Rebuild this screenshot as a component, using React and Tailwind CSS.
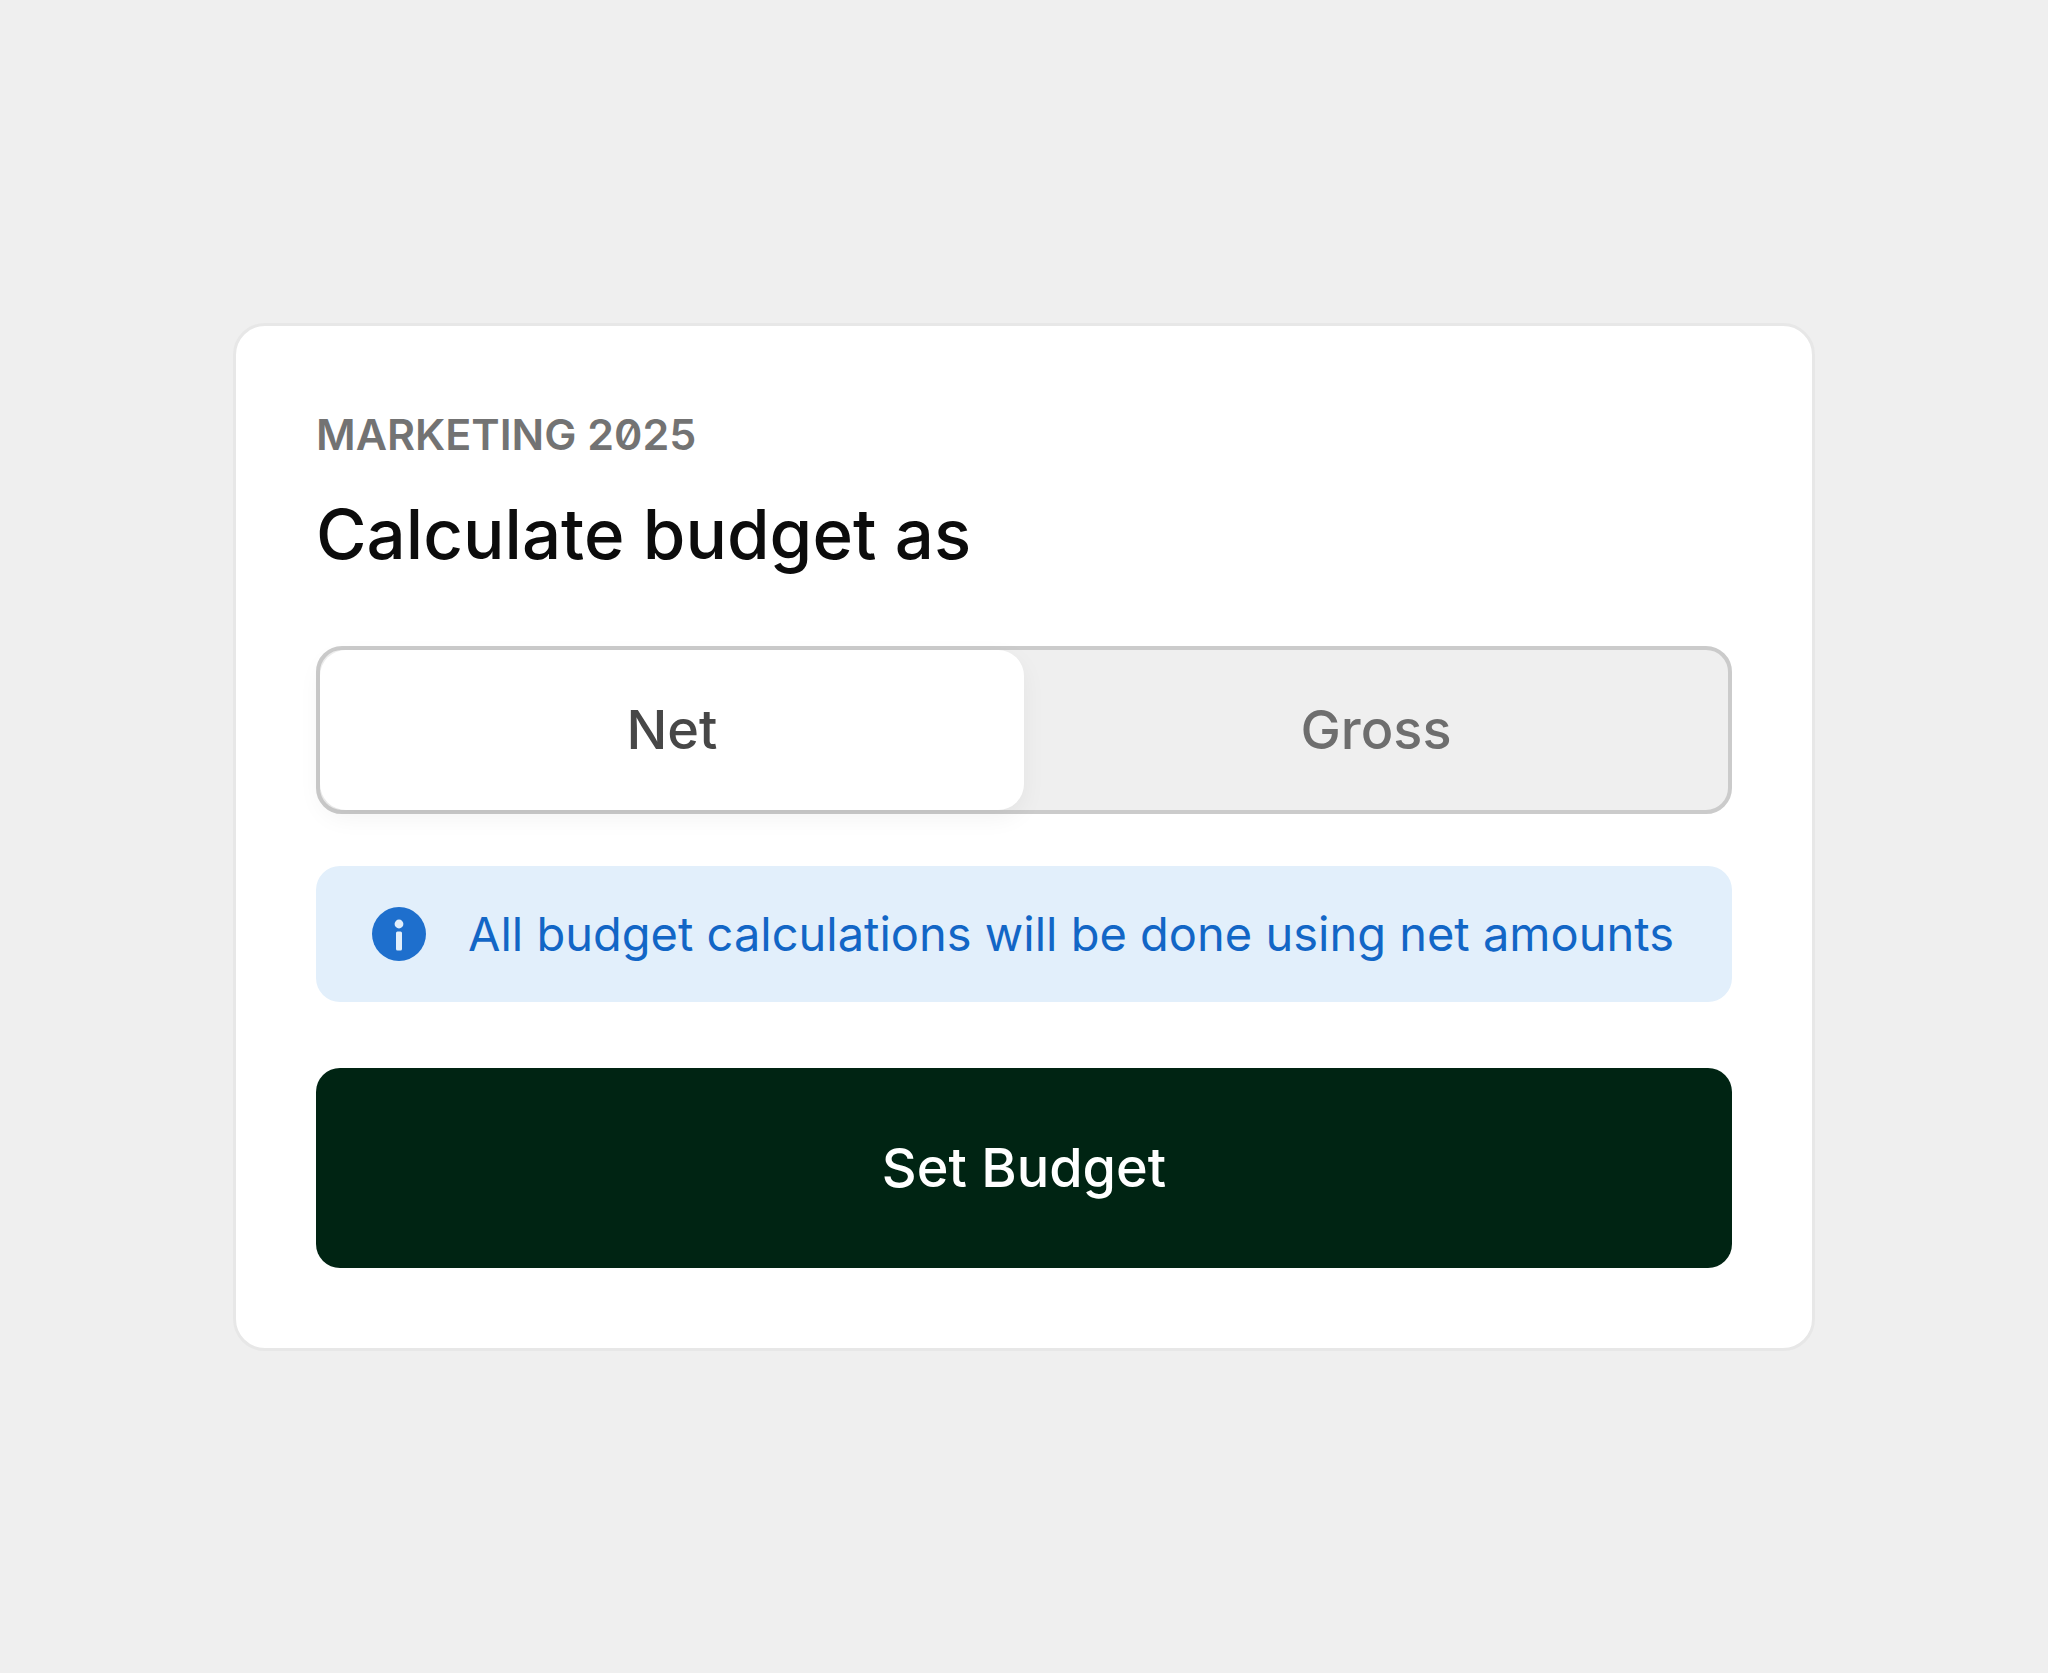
import { useState } from "react";
import clsx from "clsx";

const MODES = [
  { value: "net", label: "Net" },
  { value: "gross", label: "Gross" },
];

function InfoIcon() {
  return (
    <svg viewBox="0 0 54 54" className="h-[54px] w-[54px] shrink-0" aria-hidden="true">
      <circle cx="27" cy="27" r="27" fill="#1e6fcd" />
      <circle cx="27" cy="17" r="4.4" fill="#e2effb" />
      <rect x="24" y="24.5" width="6" height="19" rx="1.5" fill="#e2effb" />
    </svg>
  );
}

export default function App() {
  const [mode, setMode] = useState("net");

  const onSubmit = (e) => {
    e.preventDefault();
  };

  return (
    <main className="flex min-h-dvh items-center justify-center bg-[#efefef] p-4 font-['Inter',sans-serif]">
      {/* Card */}
      <form
        onSubmit={onSubmit}
        className="w-full max-w-[1582px] rounded-[32px] border-3 border-[#e7e7e7] bg-white p-20"
      >
        <p className="text-[43px] leading-14 font-semibold text-[#737373] uppercase slashed-zero">
          Marketing 2025
        </p>
        <h1 id="budget-mode" className="mt-8 text-[69px] leading-20 font-medium text-[#0c0c0c]">
          Calculate budget as
        </h1>

        {/* Net / gross switch */}
        <div
          role="radiogroup"
          aria-labelledby="budget-mode"
          className="mt-18 grid grid-cols-2 rounded-[26px] border-4 border-[#cbcbcb] bg-[#efefef]"
        >
          {MODES.map((item) => (
            <label
              key={item.value}
              className={clsx(
                "cursor-pointer rounded-[26px] py-10 text-center text-[54px] leading-20 font-medium",
                mode === item.value
                  ? "bg-white text-[#474747] shadow-[0_8px_24px_rgba(0,0,0,0.05)]"
                  : "text-[#6e6e6e]"
              )}
            >
              <input
                type="radio"
                name="mode"
                value={item.value}
                checked={mode === item.value}
                onChange={() => setMode(item.value)}
                className="sr-only"
              />
              {item.label}
            </label>
          ))}
        </div>

        {/* Notice */}
        <div className="mt-[52px] flex items-center gap-[42px] rounded-3xl bg-[#e2effb] py-7 pr-10 pl-14 text-[#1266c6]">
          <InfoIcon />
          <p className="text-[47px] leading-20">
            All budget calculations will be done using {mode} amounts
          </p>
        </div>

        <button
          type="submit"
          className="mt-[66px] w-full cursor-pointer rounded-3xl bg-[#002413] py-15 text-[54px] leading-20 font-medium text-white"
        >
          Set Budget
        </button>
      </form>
    </main>
  );
}
